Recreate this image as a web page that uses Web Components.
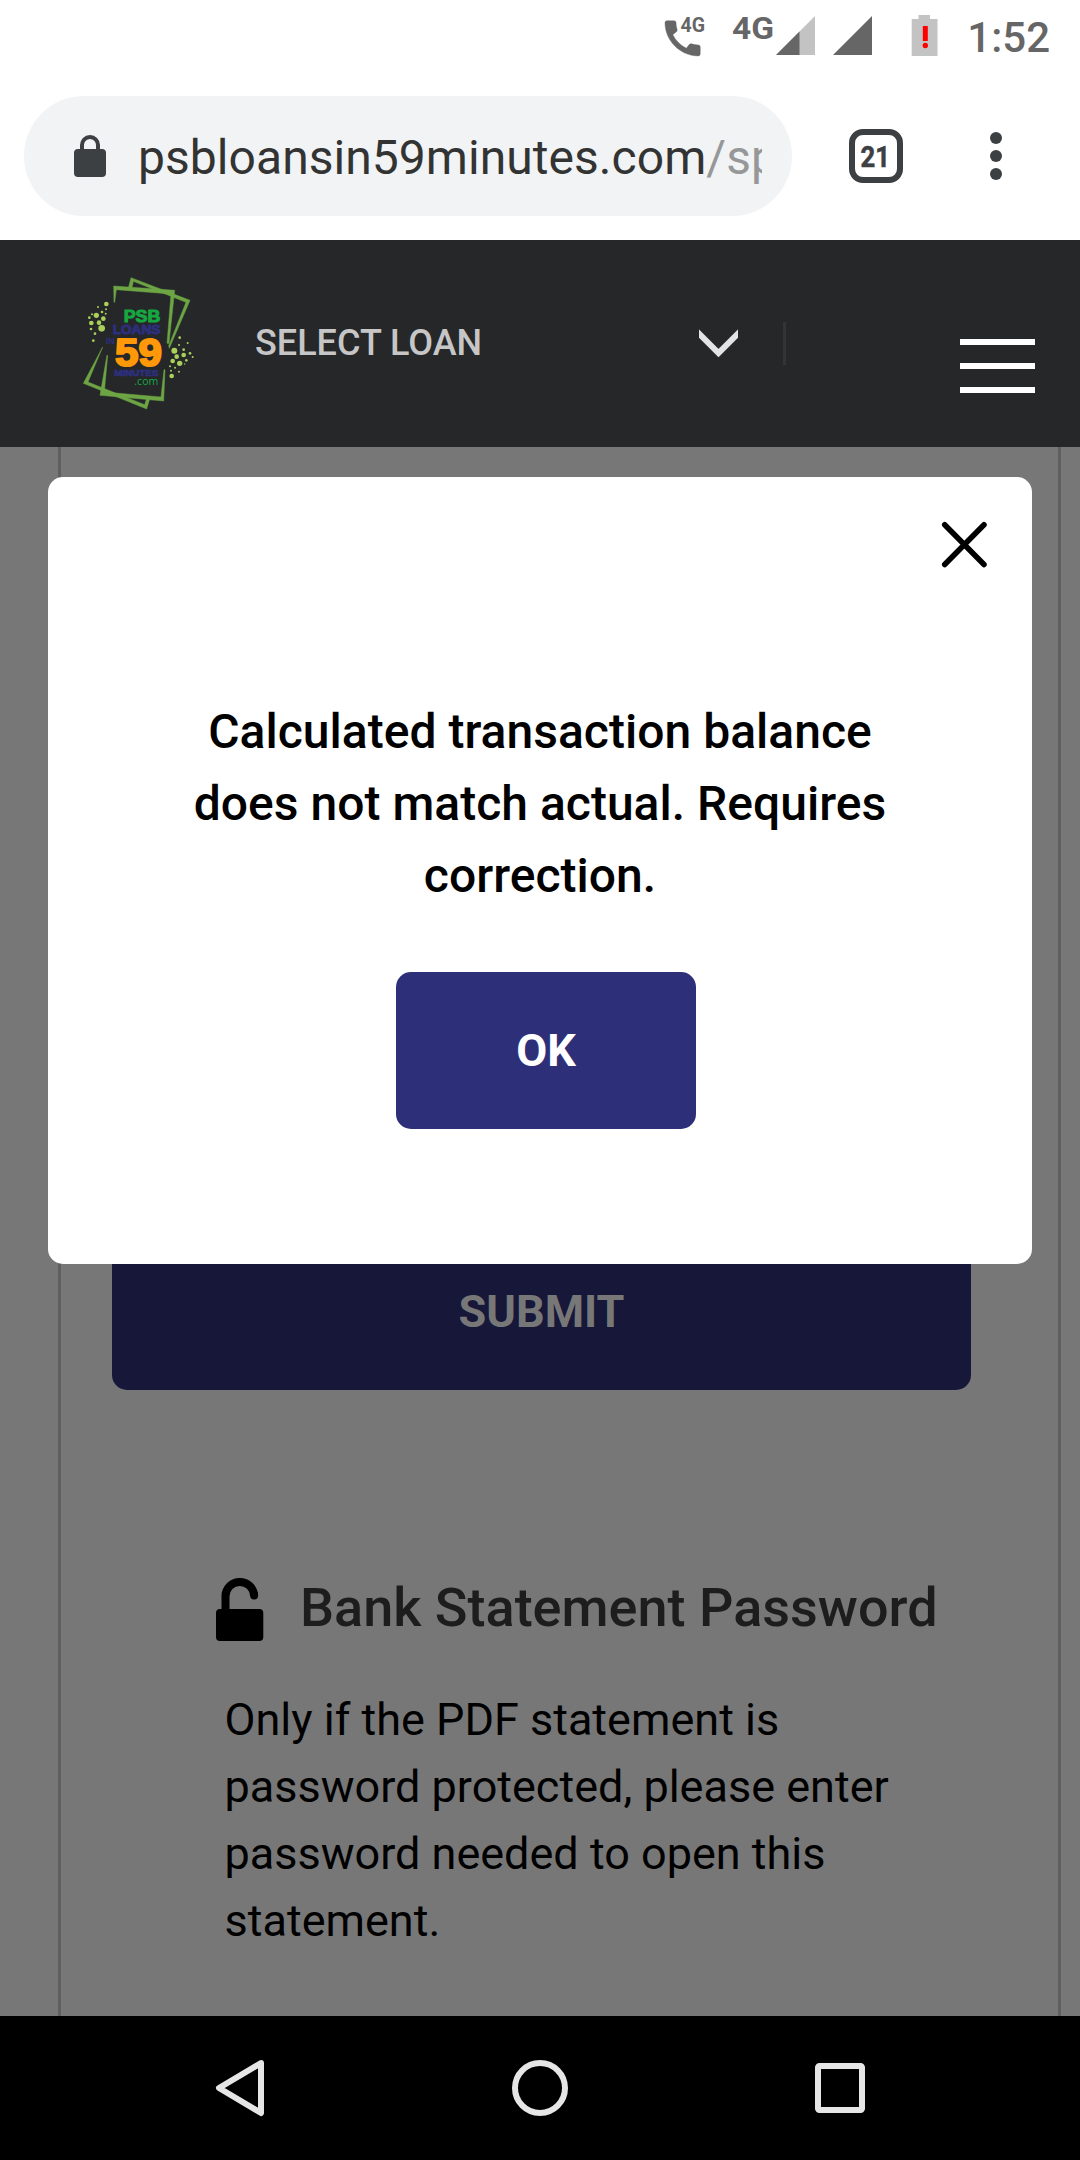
<!DOCTYPE html>
<html lang="en">
<head>
<meta charset="utf-8">
<title>PSB Loans in 59 Minutes</title>
<style>
body{margin:0;font-family:Roboto,"Liberation Sans",sans-serif;background:#fff}
</style>
</head>
<body>
<phone-screen>
  <status-bar slot="top" time="1:52"></status-bar>
  <browser-bar slot="top" tabs="21"><span>psbloansin59minutes.com</span><span slot="path">/sp</span></browser-bar>
  <site-header slot="header">SELECT LOAN</site-header>
  <form-card slot="page">
    <submit-button>SUBMIT</submit-button>
    <password-note><span slot="title">Bank Statement Password</span>Only if the PDF statement is password protected, please enter password needed to open this statement.</password-note>
  </form-card>
  <alert-dialog slot="dialog">Calculated transaction balance does not match actual. Requires correction.<span slot="action">OK</span></alert-dialog>
  <nav-bar slot="nav"></nav-bar>
</phone-screen>
<script>
const define = (name, html) => customElements.define(name, class extends HTMLElement {
  constructor() {
    super();
    const t = document.createElement('template');
    t.innerHTML = html;
    this.attachShadow({mode: 'open'}).append(t.content.cloneNode(true));
    this.shadowRoot.querySelectorAll('[data-attr]').forEach(n => { n.textContent = this.getAttribute(n.dataset.attr); });
  }
});

define('phone-screen', `
<style>
:host{display:flex;flex-direction:column;width:1080px;height:2160px;overflow:hidden;background:#fff}
main{position:relative;flex:1;background:#777;min-height:0;overflow:hidden}
</style>
<slot name="top"></slot><slot name="header"></slot>
<main><slot name="page"></slot><slot name="dialog"></slot></main>
<slot name="nav"></slot>`);

define('status-bar', `
<style>
:host{display:flex;height:72px;justify-content:flex-end;color:#666;box-sizing:border-box;padding-right:30px}
svg{display:block;flex:none}
.time{font-size:42px;font-weight:500;line-height:48px;padding-top:14px;width:84px;text-align:right;white-space:nowrap}
</style>
<svg width="306" height="72" viewBox="660 0 306 72">
 <path transform="translate(659.1 14.8) scale(1.96)" fill="#666" stroke="#666" stroke-width=".2" d="M20.010 15.380c-1.230 0-2.420-.2-3.530-.56-.35-.12-.74-.03-1.010.24l-1.570 1.970c-2.830-1.350-5.480-3.900-6.890-6.830l1.950-1.660c.27-.28.35-.67.24-1.020-.37-1.110-.56-2.300-.56-3.530 0-.54-.45-.99-.99-.99H4.190C3.650 3 3 3.240 3 3.990 3 13.280 10.730 21 20.010 21c.71 0 .99-.63.99-1.180v-3.450c0-.54-.45-.99-.99-.99z"/>
 <text x="680.500" y="32" font-size="20" font-weight="700" fill="#666" textLength="24.500" lengthAdjust="spacingAndGlyphs">4G</text>
 <text x="732" y="39" font-size="31.500" font-weight="700" fill="#666" textLength="42" lengthAdjust="spacingAndGlyphs">4G</text>
 <path fill="#c3c3c3" d="M815 16V55H776z"/><path fill="#666" d="M799.500 31.500V55H776z"/>
 <path fill="#666" d="M872 16V55H833z"/>
 <path fill="#c3c3c3" d="M918.500 15h11.500v4h7.500v37H911.700V19h6.800z"/>
 <path fill="#f00" d="M922.800 26h5v15h-5z"/><circle cx="925.300" cy="45.500" r="2.700" fill="#f00"/>
</svg>
<span class="time" data-attr="time"></span>`);

define('browser-bar', `
<style>
:host{display:flex;height:168px;align-items:flex-start;padding:24px 0 0 24px;box-sizing:border-box}
.pill{display:flex;width:768px;height:120px;border-radius:60px;background:#f1f3f4;box-sizing:border-box;padding:0 30px 0 48px;align-items:center}
svg{display:block;flex:none}
.url{margin-left:30px;flex:1;overflow:hidden;white-space:nowrap;font-size:48px;line-height:60px;color:#333;letter-spacing:.05px;padding-top:3px}
.path{color:#969798}
</style>
<div class="pill">
 <svg width="36" height="44" viewBox="72 133 36 44"><rect x="74" y="148" width="32" height="28" rx="4" fill="#3c4043"/><path d="M82 149v-5a8 8 0 0 1 16 0v5" fill="none" stroke="#3c4043" stroke-width="4"/></svg>
 <div class="url"><slot></slot><span class="path"><slot name="path"></slot></span></div>
</div>
<svg width="288" height="120" viewBox="792 96 288 120">
 <rect x="852" y="132" width="48" height="48" rx="11" fill="none" stroke="#3c4043" stroke-width="6"/>
 <text x="860.500" y="167" font-size="30" font-weight="700" fill="#3c4043" stroke="#3c4043" stroke-width=".6" textLength="29.500" lengthAdjust="spacingAndGlyphs" data-attr="tabs"></text>
 <g fill="#3c4043"><circle cx="996" cy="138" r="6"/><circle cx="996" cy="156" r="6"/><circle cx="996" cy="174" r="6"/></g>
</svg>`);

define('brand-logo', `
<style>:host{display:block}svg{display:block}</style>
<svg width="140" height="155" viewBox="0 0 420 465">
 <g fill="#6da544" stroke="#6da544" stroke-width="1.500">
  <path d="M176 66L183 38 360 106 298 250 296 242 348 112 190 49 186 68z"/>
  <path d="M131 63L314 76 297 235 291 235 303 87 139 74 134 112 132 112z"/>
  <path d="M98 246L40 355 230 432 239 402 230 400 224 419 54 351z"/>
  <path d="M111 270L90 391 281 408 285 314 282 314 273 396 103 381 113 272z"/>
 </g>
 <g fill="#a9d05a">
  <circle cx="109" cy="117" r="7"/><circle cx="84" cy="126" r="3"/><circle cx="108" cy="133" r="3"/><circle cx="96" cy="141" r="4"/><circle cx="107" cy="146" r="3"/><circle cx="79" cy="151" r="8"/><circle cx="66" cy="148" r="3"/><circle cx="58" cy="158" r="4"/><circle cx="100" cy="161" r="7"/><circle cx="64" cy="174" r="7"/><circle cx="87" cy="173" r="7"/><circle cx="63" cy="192" r="4"/><circle cx="95" cy="190" r="10"/><circle cx="75" cy="206" r="4"/><circle cx="70" cy="227" r="4"/>
  <circle cx="329" cy="218" r="4"/><circle cx="353" cy="234" r="3"/><circle cx="327" cy="240" r="3"/><circle cx="313" cy="257" r="9"/><circle cx="341" cy="254" r="4"/><circle cx="360" cy="265" r="4"/><circle cx="368" cy="276" r="3"/><circle cx="341" cy="270" r="7"/><circle cx="320" cy="275" r="7"/><circle cx="308" cy="288" r="7"/><circle cx="329" cy="295" r="8"/><circle cx="349" cy="286" r="4"/><circle cx="344" cy="297" r="2"/><circle cx="300" cy="304" r="3"/><circle cx="315" cy="308" r="3"/><circle cx="303" cy="317" r="3"/><circle cx="305" cy="333" r="7"/><circle cx="327" cy="320" r="3"/>
 </g>
 <g font-family="Liberation Sans" font-weight="700" stroke-linejoin="round">
  <text x="161" y="170" font-size="52" fill="#17a740" stroke="#17a740" stroke-width="3" textLength="110" lengthAdjust="spacingAndGlyphs">PSB</text>
  <text x="128" y="207" font-size="39" fill="#2d2f7e" stroke="#2d2f7e" stroke-width="3" textLength="143" lengthAdjust="spacingAndGlyphs">LOANS</text>
  <text x="107" y="236" font-size="25" fill="#2d2f7e" textLength="27" lengthAdjust="spacingAndGlyphs">IN</text>
  <text x="135" y="303" font-size="114" fill="#ff9909" stroke="#ff9909" stroke-width="6" textLength="141" lengthAdjust="spacingAndGlyphs">59</text>
  <text x="133" y="332" font-size="25" fill="#2d2f7e" stroke="#2d2f7e" stroke-width="2" textLength="132" lengthAdjust="spacingAndGlyphs">MINUTES</text>
 </g>
 <text x="193" y="360" font-family="Open Sans" font-size="34" fill="#17a740" textLength="72" lengthAdjust="spacingAndGlyphs">.com</text>
</svg>`);

define('site-header', `
<style>
:host{display:flex;height:207px;background:#252729;box-sizing:border-box;padding-left:70px;align-items:flex-start}
brand-logo{margin-top:25px;flex:none}
.label{margin:81px 0 0 45px;width:442px;font-size:36px;line-height:44px;font-weight:500;color:#c6c6c6;white-space:nowrap}
svg{display:block;flex:none}
</style>
<brand-logo></brand-logo>
<div class="label"><slot></slot></div>
<svg width="383" height="207" viewBox="697 240 383 207">
 <svg x="699" y="328" width="39" height="30" viewBox="699 328 39 30"><path d="M697 331.500L718.500 353 740 331.500" fill="none" stroke="#e4e4e4" stroke-width="6"/></svg>
 <path fill="#323436" d="M783 322h3v43h-3z"/>
 <path fill="#fff" d="M960 339h75v6h-75zM960 363h75v6h-75zM960 387h75v6h-75z"/>
</svg>`);

define('form-card', `
<style>
:host{display:block;box-sizing:border-box;height:100%;margin:0 19px 0 58px;border:solid #5f5f5f;border-width:0 3px;padding:786px 51px 0}
</style><slot></slot>`);

define('submit-button', `
<style>
:host{display:flex;width:859px;height:157px;border-radius:15px;background:#171739;color:#777;align-items:center;justify-content:center;font-size:45px;font-weight:700;box-sizing:border-box}
</style><slot></slot>`);

define('password-note', `
<style>
:host{display:block;padding:183px 0 0 102px}
header{display:flex;align-items:flex-start;height:91px;font-size:54px;font-weight:500;line-height:70px;color:#1d1d1d;white-space:nowrap}
svg{display:block;margin:5px 36px 0 2px;flex:none}
p{margin:22px 0 0 10.500px;width:690px;font-size:45px;line-height:67px;color:#000}
</style>
<header><svg width="48" height="64" viewBox="0 0 48 64"><rect x="0" y="31" width="47.300" height="32" rx="4"/><path d="M9.500 34V18.500a14.300 14.300 0 0 1 28.600 -.5" fill="none" stroke="#000" stroke-width="8"/><path d="M38.100 16.500v1" stroke="#000" stroke-width="8" stroke-linecap="round"/></svg><slot name="title"></slot></header>
<p><slot></slot></p>`);

define('alert-dialog', `
<style>
:host{position:absolute;left:48px;top:30px;width:984px;height:787px;background:#fff;border-radius:15px;display:flex;flex-direction:column;box-sizing:border-box;color:#000}
.close{align-self:flex-end;margin:43px 43px 0 0;display:block}
p{margin:127px 130px 0;text-align:center;font-size:48px;line-height:72px;font-weight:500;letter-spacing:.02px}
.ok{margin:60px 0 0 348px;width:300px;height:157px;border-radius:15px;background:#2d2f78;color:#fff;font-size:45px;font-weight:700;display:flex;align-items:center;justify-content:center}
</style>
<svg class="close" width="49" height="49" viewBox="0 0 49 49"><path d="M4.700 4.700L44 44.500M44 4.700L4.700 44.500" stroke="#000" stroke-width="5.500" stroke-linecap="round"/></svg>
<p><slot></slot></p>
<div class="ok"><slot name="action"></slot></div>`);

define('nav-bar', `
<style>:host{display:flex;height:144px;background:#000;align-items:center;justify-content:center;gap:240px}svg{display:block}
</style>
<svg width="60" height="60" viewBox="0 0 60 60"><path d="M51 5L9 30 51 55z" fill="none" stroke="#e6e6e6" stroke-width="6" stroke-linejoin="round"/></svg>
<svg width="60" height="60" viewBox="0 0 60 60"><circle cx="30" cy="30" r="25" fill="none" stroke="#e6e6e6" stroke-width="6"/></svg>
<svg width="60" height="60" viewBox="0 0 60 60"><rect x="8" y="8" width="44" height="44" rx="1.500" fill="none" stroke="#e6e6e6" stroke-width="6"/></svg>`);
</script>
</body>
</html>
